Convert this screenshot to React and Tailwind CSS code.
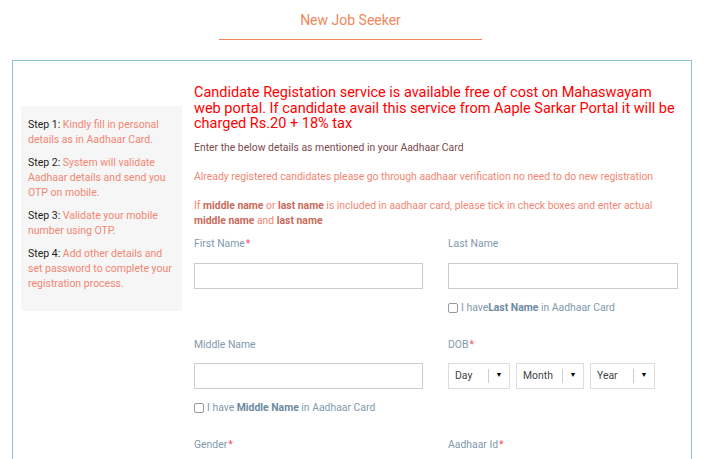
import React from 'react';

const steps = [
  { n: 'Step 1:', t: 'Kindly fill in personal details as in Aadhaar Card.' },
  { n: 'Step 2:', t: 'System will validate Aadhaar details and send you OTP on mobile.' },
  { n: 'Step 3:', t: 'Validate your mobile number using OTP.' },
  { n: 'Step 4:', t: 'Add other details and set password to complete your registration process.' },
];

function Label({ children, req }) {
  return (
    <div className="text-[10.4px] leading-[14px] text-[#7f99ae]">
      {children}
      {req && <span className="text-[#f0506e] ml-[1px]">*</span>}
    </div>
  );
}

function Check({ children }) {
  return (
    <label className="flex items-center gap-[3px] text-[10.4px] leading-[14px] text-[#7f99ae]">
      <span className="w-[10px] h-[10px] border border-[#999] rounded-[2px] bg-white" />
      <span>{children}</span>
    </label>
  );
}

function Select({ label, w }) {
  return (
    <div className={`h-[26px] border border-[#ddd] flex items-center pl-[6px] ${w}`}>
      <span className="flex-1 text-[10.4px] text-[#444]">{label}</span>
      <span className="h-[14px] w-px bg-[#ccc]" />
      <span className="w-[20px] text-center text-[7px] text-black">▼</span>
    </div>
  );
}

export default function App() {
  return (
    <div className="w-[705px] h-[459px] overflow-hidden bg-white font-['Roboto',sans-serif]">
      {/* Heading */}
      <div className="flex flex-col items-center pt-[11px] pr-[4px]">
        <h1 className="text-[14px] leading-[18px] text-[#f0885c]">New Job Seeker</h1>
        <div className="mt-[10px] w-[263px] h-px bg-[#ef8356]" />
      </div>

      <div className="ml-[12px] mt-[20px] w-[680px] h-[420px] border border-[#8cbfd7] border-b-0 flex pl-[8px] pr-[13px]">
        {/* Steps sidebar */}
        <div className="mt-[45px] w-[161px] h-[205px] shrink-0 bg-[#f6f6f6] px-[7px] pt-[11px] text-[10.5px] leading-[15px]">
          {steps.map((s) => (
            <p key={s.n} className="mb-[8px] text-[#f28673]">
              <span className="text-[#222]">{s.n}</span> {s.t}
            </p>
          ))}
        </div>

        {/* Form */}
        <div className="ml-[12px] flex-1 pt-[24px]">
          <p className="text-[14.5px] leading-[15.5px] text-[#ff0000]">
            Candidate Registation service is available free of cost on Mahaswayam web portal. If candidate avail this service from Aaple Sarkar Portal it will be charged Rs.20 + 18% tax
          </p>
          <p className="mt-[9px] text-[10.4px] leading-[14px] text-[#7b4a4e]">
            Enter the below details as mentioned in your Aadhaar Card
          </p>
          <p className="mt-[15px] text-[10.4px] leading-[14px] text-[#f28673]">
            Already registered candidates please go through aadhaar verification no need to do new registration
          </p>
          <p className="mt-[14px] text-[10.4px] leading-[15px] text-[#f28673]">
            If <b className="font-bold text-[#c96a5a]">middle name</b> or <b className="font-bold text-[#c96a5a]">last name</b> is included in aadhaar card, please tick in check boxes and enter actual <b className="font-bold text-[#c96a5a]">middle name</b> and <b className="font-bold text-[#c96a5a]">last name</b>
          </p>

          <div className="mt-[9px] grid grid-cols-[229px_230px] gap-x-[25px]">
            <div>
              <Label req>First Name</Label>
              <div className="mt-[12px] h-[26px] border border-[#ccc]" />
            </div>
            <div>
              <Label>Last Name</Label>
              <div className="mt-[12px] h-[26px] border border-[#ccc]" />
              <div className="mt-[12px]">
                <Check>
                  I have<b className="font-bold text-[#6c8aa2]">Last Name</b> in Aadhaar Card
                </Check>
              </div>
            </div>

            <div className="mt-[23px]">
              <Label>Middle Name</Label>
              <div className="mt-[11px] h-[26px] border border-[#ccc]" />
              <div className="mt-[12px]">
                <Check>
                  I have <b className="font-bold text-[#6c8aa2]">Middle Name</b> in Aadhaar Card
                </Check>
              </div>
            </div>
            <div className="mt-[23px]">
              <Label req>DOB</Label>
              <div className="mt-[11px] flex gap-[6px]">
                <Select label="Day" w="w-[62px]" />
                <Select label="Month" w="w-[68px]" />
                <Select label="Year" w="w-[65px]" />
              </div>
            </div>

            <div className="mt-[23px]">
              <Label req>Gender</Label>
            </div>
            <div className="mt-[23px]">
              <Label req>Aadhaar Id</Label>
            </div>
          </div>
        </div>
      </div>
    </div>
  );
}
